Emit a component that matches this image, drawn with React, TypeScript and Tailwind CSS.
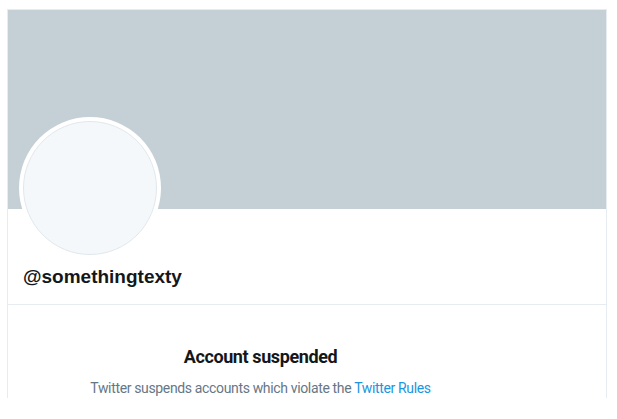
export default function App() {
  return (
    <div className="h-[419px] w-[617px] overflow-hidden bg-white font-['Liberation_Sans',Arial,sans-serif]">
      <div className="ml-[7px] mt-[9px] w-[600px] border-x border-t border-[#e6ecf0]">
        <div className="h-[199px] bg-[#c5d0d6]" />
        <div className="relative h-[95px] px-[15px]">
          <div className="absolute left-[11px] top-[-92px] h-[142px] w-[142px] rounded-full bg-white p-[4px]">
            <div className="h-full w-full rounded-full border border-[#e1e8ed] bg-[#f5f8fa]" />
          </div>
          <div className="pt-[56px] text-[19px] font-bold leading-[24px] text-[#14171a]">
            @somethingtexty
          </div>
        </div>
        <div className="border-t border-[#e6ecf0] pr-[93px] pt-[40px] text-center font-['Roboto',Arial,sans-serif]">
          <div className="text-[18px] font-bold leading-[24px] tracking-[-0.4px] text-[#14171a]">
            Account suspended
          </div>
          <div className="mt-[9px] text-[14px] leading-[20px] tracking-[-0.35px] text-[#657786]">
            Twitter suspends accounts which violate the{" "}
            <span className="text-[#1b95e0]">Twitter Rules</span>
          </div>
        </div>
      </div>
    </div>
  );
}
